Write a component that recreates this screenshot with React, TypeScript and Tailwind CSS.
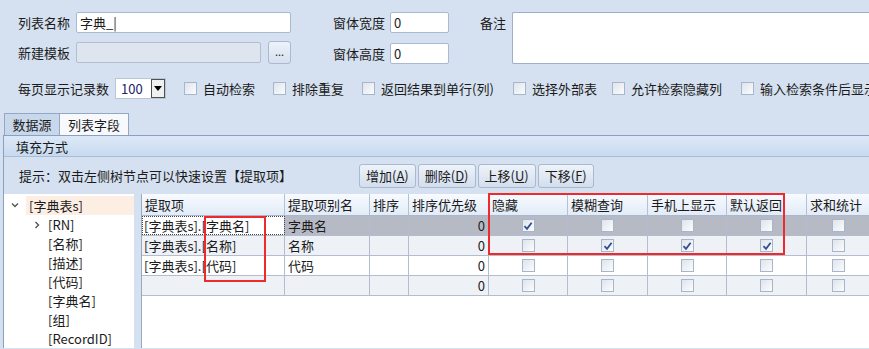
import React from "react";

const font = { fontFamily: '"Noto Sans CJK SC", "Liberation Sans", sans-serif' };

function Box({ checked = false }: { checked?: boolean }) {
    return (
        <span className="inline-grid place-items-center w-[13px] h-[13px] border border-[#a7b6cb] bg-gradient-to-br from-[#dfe4ec] to-[#fbfcfd] shrink-0">
            {checked && (
                <svg width="10" height="10" viewBox="0 0 10 10">
                    <path d="M1.5 5.2 L4 7.8 L8.6 1.8" fill="none" stroke="#2f4f94" strokeWidth="1.8" />
                </svg>
            )}
        </span>
    );
}

function Check({ label, w }: { label: string; w: number }) {
    return (
        <div className="flex items-center gap-[6px] shrink-0" style={{ width: w }}>
            <Box />
            <span className="whitespace-nowrap">{label}</span>
        </div>
    );
}

function Btn({ text, k }: { text: string; k: string }) {
    return (
        <div className="h-[24px] px-[6px] flex items-center rounded-[3px] border border-[#a9b9cf] bg-gradient-to-b from-[#eef3fa] to-[#d3deed] whitespace-nowrap">
            {text}(<span className="underline">{k}</span>)
        </div>
    );
}

const cols = [143, 85, 39, 80, 79, 80, 79, 80, 63];
const heads = ["提取项", "提取项别名", "排序", "排序优先级", "隐藏", "模糊查询", "手机上显示", "默认返回", "求和统计"];
const rows = [
    { item: "[字典表s].[字典名]", alias: "字典名", checks: [true, false, false, false, false], bg: "bg-[#b6bac5]" },
    { item: "[字典表s].[名称]", alias: "名称", checks: [false, true, true, true, false], bg: "bg-[#eef1f6]" },
    { item: "[字典表s].[代码]", alias: "代码", checks: [false, false, false, false, false], bg: "bg-white" },
    { item: "", alias: "", checks: [false, false, false, false, false], bg: "bg-[#eef1f6]" },
];

const tree = ["[RN]", "[名称]", "[描述]", "[代码]", "[字典名]", "[组]", "[RecordID]"];

export default function App() {
    return (
        <div className="w-[869px] h-[349px] overflow-hidden bg-[#d5e1f0] text-[13px] text-[#1b1b1b] leading-none" style={font}>
            {/* top form */}
            <div className="flex pt-[12px] pl-[18px] h-[66px]">
                <div className="w-[273px] shrink-0">
                    <div className="flex items-center h-[21px]">
                        <span className="w-[58px] shrink-0 whitespace-nowrap">列表名称</span>
                        <div className="w-[215px] h-[21px] bg-white border border-[#a9b9d0] rounded-[2px] flex items-center px-[3px]">字典_|</div>
                    </div>
                    <div className="flex items-center h-[23px] mt-[8px]">
                        <span className="w-[58px] shrink-0 whitespace-nowrap">新建模板</span>
                        <div className="w-[185px] h-[21px] bg-[#dfe5ee] border border-[#b3bfd0] rounded-[2px]" />
                        <div className="ml-[7px] w-[23px] h-[23px] rounded-[3px] border border-[#a9b9cf] bg-gradient-to-b from-[#eef3fa] to-[#d6e0ee] grid place-items-center text-[11px] pb-[2px]">...</div>
                    </div>
                </div>
                <div className="ml-[42px] w-[116px] shrink-0">
                    <div className="flex items-center h-[21px]">
                        <span className="w-[57px] shrink-0 whitespace-nowrap">窗体宽度</span>
                        <div className="w-[59px] h-[21px] bg-white border border-[#a9b9d0] rounded-[2px] flex items-center px-[3px]">0</div>
                    </div>
                    <div className="flex items-center h-[21px] mt-[10px]">
                        <span className="w-[57px] shrink-0 whitespace-nowrap">窗体高度</span>
                        <div className="w-[59px] h-[21px] bg-white border border-[#a9b9d0] rounded-[2px] flex items-center px-[3px]">0</div>
                    </div>
                </div>
                <div className="ml-[31px] h-[21px] flex items-center w-[32px] shrink-0">备注</div>
                <div className="flex-1 h-[52px] bg-white border border-[#9fb0c9] border-r-0 rounded-l-[2px]" />
            </div>

            {/* options row */}
            <div className="flex items-center pl-[18px] mt-[12px] h-[21px] whitespace-nowrap">
                <span className="w-[97px] shrink-0">每页显示记录数</span>
                <div className="flex h-[21px] w-[51px] shrink-0 bg-white border border-[#b9c6d8]">
                    <span className="flex-1 flex items-center pl-[5px] text-[#1c2366]">100</span>
                    <span className="w-[14px] h-[19px] border border-[#505050] bg-[#f0f0f0] grid place-items-center">
                        <svg width="8" height="5" viewBox="0 0 8 5"><path d="M0 0 H8 L4 5 Z" fill="#000" /></svg>
                    </span>
                </div>
                <div className="flex ml-[18px]">
                    <Check label="自动检索" w={89} />
                    <Check label="排除重复" w={89} />
                    <Check label="返回结果到单行(列)" w={151} />
                    <Check label="选择外部表" w={99} />
                    <Check label="允许检索隐藏列" w={129} />
                    <Check label="输入检索条件后显示" w={140} />
                </div>
            </div>

            {/* tabs */}
            <div className="flex mt-[14px] pl-[4px] h-[22px]">
                <div className="w-[56px] h-[22px] border border-b-0 border-[#92a8c6] bg-[#c9d7ea] flex items-center justify-center">数据源</div>
                <div className="w-[69px] h-[22px] border border-b-0 border-l-0 border-[#92a8c6] bg-[#f7f9fd] flex items-center justify-center">列表字段</div>
            </div>

            {/* panel */}
            <div className="ml-[3px] border-t border-l border-[#8aa0c0]">
                <div className="h-[21px] flex items-center pl-[12px] bg-gradient-to-b from-[#dce8f7] to-[#c8daf0] border-b border-[#a9bdd8]">填充方式</div>
                <div className="h-[37px] flex items-center pl-[15px]">
                    <span className="w-[340px] shrink-0 whitespace-nowrap">提示：双击左侧树节点可以快速设置【提取项】</span>
                    <div className="flex gap-[2px]">
                        <Btn text="增加" k="A" />
                        <Btn text="删除" k="D" />
                        <Btn text="上移" k="U" />
                        <Btn text="下移" k="F" />
                    </div>
                </div>
                <div className="flex h-[154px]">
                    {/* tree */}
                    <div className="w-[130px] shrink-0 bg-white pt-[1px]">
                        <div className="flex items-center h-[20px]">
                            <svg className="ml-[6px]" width="10" height="10" viewBox="0 0 10 10"><path d="M2 3.5 L5 6.5 L8 3.5" fill="none" stroke="#555" strokeWidth="1.4" /></svg>
                            <span className="ml-[6px] flex-1 h-[19px] bg-[#fdeee4] flex items-center pl-[3px]">[字典表s]</span>
                        </div>
                        {tree.map((t, i) => (
                            <div key={t} className="flex items-center h-[19px]">
                                <span className="w-[44px] flex justify-end pr-[6px]">
                                    {i === 0 && (
                                        <svg width="10" height="10" viewBox="0 0 10 10"><path d="M3.5 2 L6.5 5 L3.5 8" fill="none" stroke="#555" strokeWidth="1.4" /></svg>
                                    )}
                                </span>
                                <span>{t}</span>
                            </div>
                        ))}
                    </div>
                    {/* grid */}
                    <div className="ml-[7px] flex-1 bg-white border-l border-[#9aa9c0] relative">
                        <div className="flex h-[22px] bg-gradient-to-b from-[#f8fbff] to-[#e2ebf7] border-b border-[#a9b8cf]">
                            {heads.map((h, i) => (
                                <div key={h} className="h-full border-r border-[#b3c1d6] flex items-center pl-[3px] whitespace-nowrap relative" style={{ width: cols[i] }}>
                                    {h}
                                    {i === 7 && <span className="absolute right-[21px] top-0 h-full border-r border-[#b3c1d6]" />}
                                </div>
                            ))}
                        </div>
                        {rows.map((r, ri) => (
                            <div key={ri} className={`flex h-[20px] border-b border-[#b4bdcf] ${r.bg}`}>
                                <div className={`h-full flex items-center pl-[2px] whitespace-nowrap border-r border-[#b4bdcf] ${ri === 0 ? "bg-white outline outline-1 outline-dotted outline-[#444] -outline-offset-1" : ""}`} style={{ width: cols[0] }}>{r.item}</div>
                                <div className="h-full flex items-center pl-[3px] border-r border-[#b4bdcf]" style={{ width: cols[1] }}>{r.alias}</div>
                                <div className="h-full border-r border-[#b4bdcf]" style={{ width: cols[2] }} />
                                <div className="h-full flex items-center justify-end pr-[3px] border-r border-[#b4bdcf]" style={{ width: cols[3] }}>0</div>
                                {r.checks.map((c, ci) => (
                                    <div key={ci} className="h-full grid place-items-center border-r border-[#b4bdcf]" style={{ width: cols[4 + ci] }}>
                                        <Box checked={c} />
                                    </div>
                                ))}
                            </div>
                        ))}
                        {/* annotation boxes */}
                        <div className="absolute left-[62px] top-[22px] w-[62px] h-[66px] border-2 border-[#f02a2a]" />
                        <div className="absolute left-[346px] top-[-1px] w-[297px] h-[62px] border-2 border-[#f02a2a]" />
                    </div>
                </div>
            </div>
        </div>
    );
}
